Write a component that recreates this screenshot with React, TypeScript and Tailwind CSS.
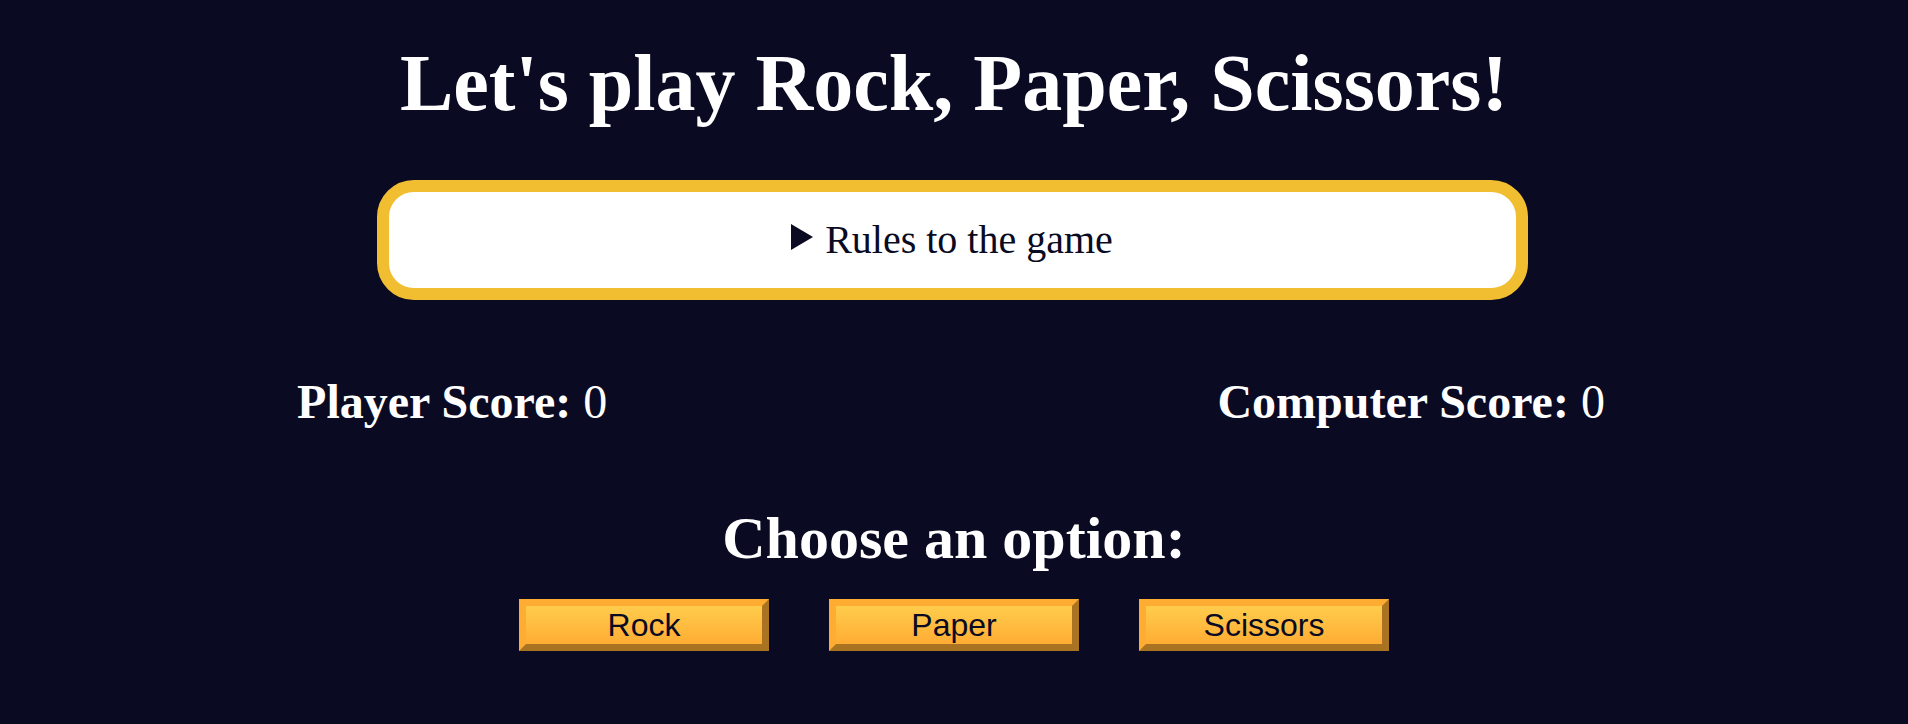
import { useState } from "react";

const options = ["Rock", "Paper", "Scissors"];

const App = () => {
  const [playerScore] = useState(0);
  const [computerScore] = useState(0);

  return (
    <div className="min-h-screen bg-[#0a0a23] text-white font-['Liberation_Serif',serif] pt-[43px]">
      <h1 className="text-center text-[80px] leading-none font-bold">Let's play Rock, Paper, Scissors!</h1>

      <main>
        <details className="mx-auto mt-[57px] w-[1151px] h-[120px] -translate-x-[2px] rounded-[37px] border-[12px] border-[#f1be32] bg-white text-[#0a0a23]">
          <summary className="flex h-full items-center justify-center gap-[12px] list-none cursor-pointer text-[40px] leading-none [&::-webkit-details-marker]:hidden">
            <svg width="22" height="26" viewBox="0 0 22 26" className="mt-[-6px]">
              <polygon points="0,0 22,13 0,26" fill="#0a0a23" />
            </svg>
            <span>Rules to the game</span>
          </summary>
        </details>

        {/* scores */}
        <div className="mt-[78px] -ml-[8px] -mr-[2px] flex justify-around text-[48px] leading-none">
          <p>
            <strong>Player Score:</strong> <span>{playerScore}</span>
          </p>
          <p>
            <strong>Computer Score:</strong> <span>{computerScore}</span>
          </p>
        </div>

        <section className="mt-[82px] text-center">
          <h2 className="text-[60px] leading-none font-bold">Choose an option:</h2>
          <div className="mt-[31px] flex justify-center gap-[60px]">
            {options.map((opt) => (
              <button
                key={opt}
                className="w-[250px] h-[52px] border-[7px] border-t-[#feac32] border-l-[#feac32] border-r-[#aa7321] border-b-[#aa7321] bg-linear-to-b from-[#fecc4c] to-[#ffac33] text-[#0a0a23] text-[32px] leading-none font-['Liberation_Sans',Arial,sans-serif] cursor-pointer"
              >
                {opt}
              </button>
            ))}
          </div>
        </section>
      </main>
    </div>
  );
};

export default App;
